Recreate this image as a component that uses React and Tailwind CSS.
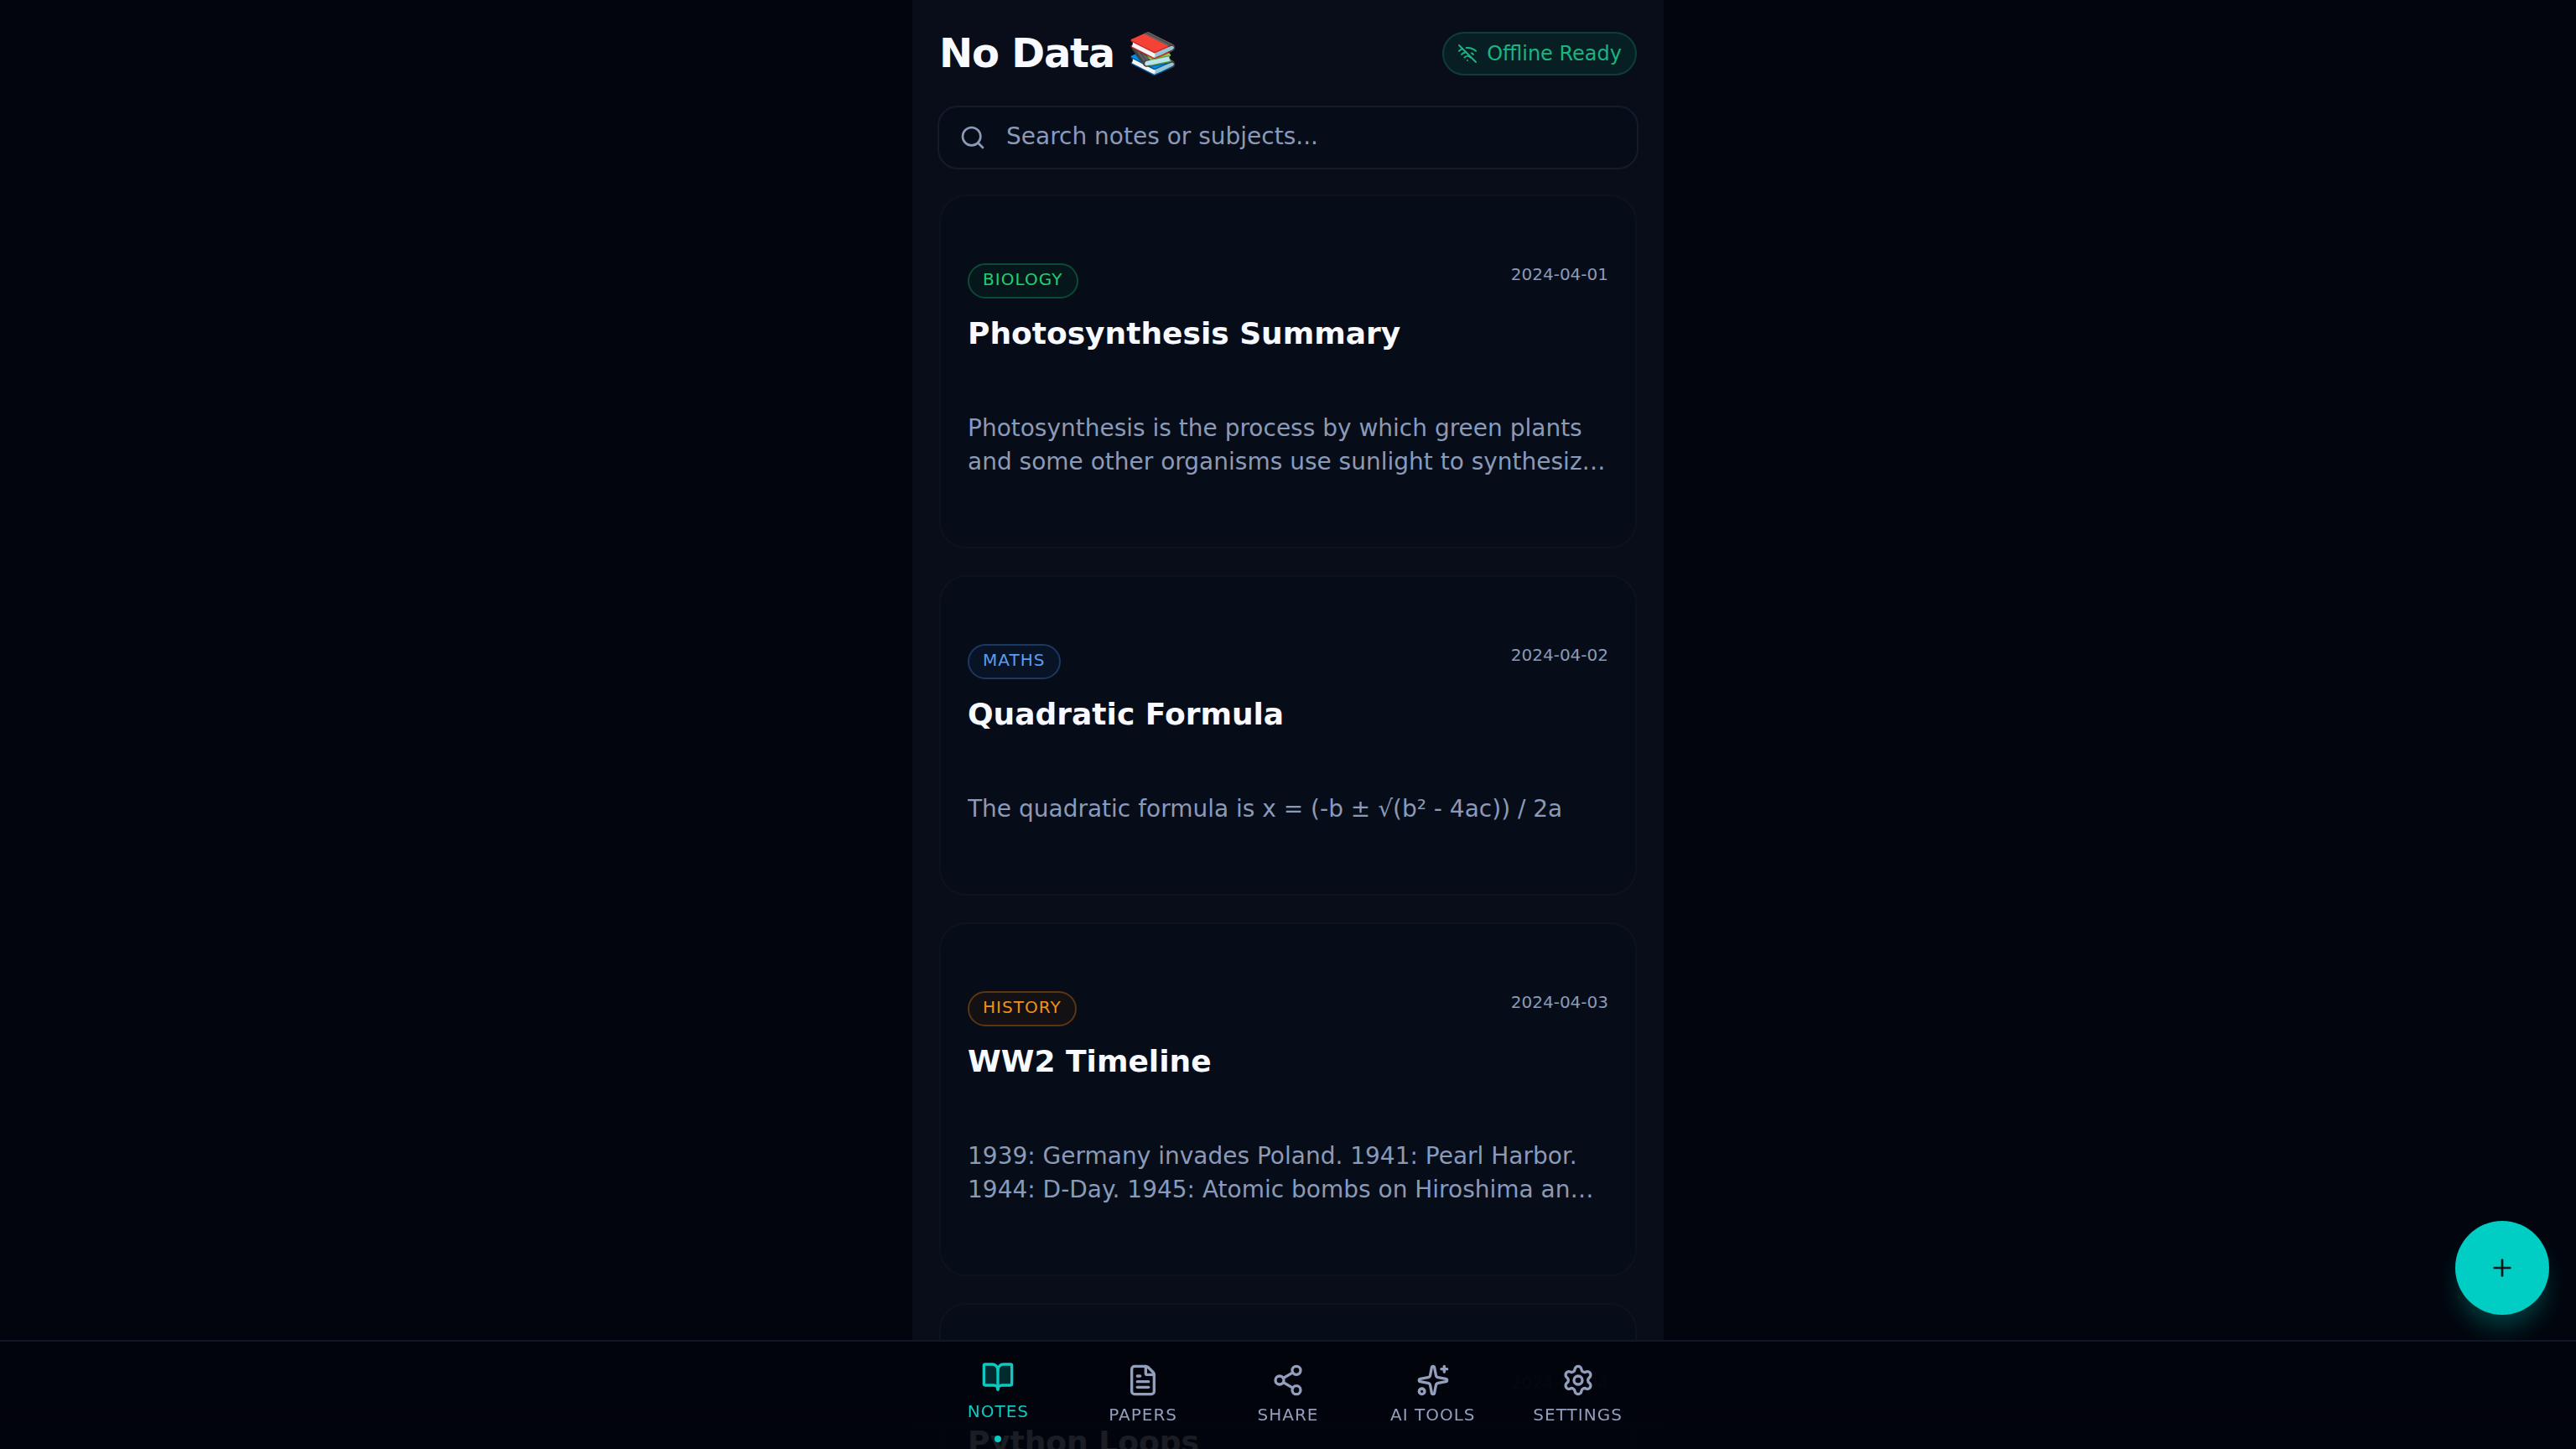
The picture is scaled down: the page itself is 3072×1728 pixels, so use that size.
import { BookOpen, FileText, Share2, Sparkles, Settings, Search, WifiOff, Plus } from "lucide-react";

const notes = [
  {
    subject: "Biology",
    date: "2024-04-01",
    title: "Photosynthesis Summary",
    body: "Photosynthesis is the process by which green plants and some other organisms use sunlight to synthesize foods from carbon dioxide and water.",
    tone: "text-[#1fd070] border-[#0c4a35] bg-[#06171b]",
  },
  {
    subject: "Maths",
    date: "2024-04-02",
    title: "Quadratic Formula",
    body: "The quadratic formula is x = (-b ± √(b² - 4ac)) / 2a",
    tone: "text-[#5a9df0] border-[#1c3760] bg-[#081326]",
  },
  {
    subject: "History",
    date: "2024-04-03",
    title: "WW2 Timeline",
    body: "1939: Germany invades Poland. 1941: Pearl Harbor. 1944: D-Day. 1945: Atomic bombs on Hiroshima and Nagasaki.",
    tone: "text-[#f0901c] border-[#5a3710] bg-[#141115]",
  },
  {
    subject: "CS",
    date: "2024-04-04",
    title: "Python Loops",
    body: "For loops iterate over a sequence. While loops run as long as a condition is true.",
    tone: "text-[#c084fc] border-[#3a1d5a] bg-[#100d1f]",
  },
];

const tabs = [
  { label: "Notes", Icon: BookOpen, active: true },
  { label: "Papers", Icon: FileText },
  { label: "Share", Icon: Share2 },
  { label: "AI Tools", Icon: Sparkles },
  { label: "Settings", Icon: Settings },
];

function NoteCard({ note }) {
  return (
    <article className="rounded-[32px] border-2 border-[#0c131f] bg-[#060d18] px-8 pt-20 pb-[81px]">
      <div className="flex items-start justify-between">
        <span className={`flex h-[42px] items-center rounded-full border-2 px-4 pb-1 text-[20px] leading-[30px] tracking-[1.05px] uppercase ${note.tone}`}>
          {note.subject}
        </span>
        <span className="text-[20px] leading-[26px] text-[#8b9ab8]">{note.date}</span>
      </div>
      <h3 className="mt-[17px] text-[36px] leading-[50px] font-bold text-[#f8faff]">{note.title}</h3>
      <p className="mt-[68px] line-clamp-2 text-[28px] leading-[40px] text-[#8b9ab8]">{note.body}</p>
    </article>
  );
}

export default function App() {
  return (
    <div className="h-[1728px] overflow-hidden bg-[#02050d] font-['DejaVu_Sans',sans-serif]">
      <main className="mx-auto h-full w-[896px] overflow-hidden bg-[#090d19] px-8">
        <header className="flex h-[126px] items-start justify-between">
          <h1 className="mt-[31px] text-[48px] leading-[64px] font-bold tracking-[-1.2px] text-[#f8faff]">No Data 📚</h1>
          <div className="mt-[38px] flex h-[52px] items-center gap-[11px] rounded-full border-2 border-[#0c3f38] bg-[#071f22] px-4 text-[24px] leading-[32px] text-[#1bb383]">
            <WifiOff size={24} strokeWidth={2} />
            <span>Offline Ready</span>
          </div>
        </header>
        <div className="-mx-0.5 flex h-[76px] items-center rounded-3xl border-2 border-[#141b2b] bg-[#060d18] pl-6 text-[#8b9ab8]">
          <Search size={32} strokeWidth={2} />
          <span className="mb-0.5 ml-6 text-[28px] leading-[40px]">Search notes or subjects...</span>
        </div>
        <div className="mt-[30px] flex flex-col gap-8">
          {notes.map((note) => (
            <NoteCard key={note.title} note={note} />
          ))}
        </div>
      </main>

      <button className="fixed right-8 bottom-40 flex size-28 items-center justify-center rounded-full bg-[#00cec5] text-[#02131a] shadow-[0_20px_30px_-6px_rgba(0,206,197,0.3)]">
        <Plus size={32} strokeWidth={2} />
      </button>

      <nav className="fixed inset-x-0 bottom-0 h-[130px] border-t-2 border-[#101827] bg-[#02040c]/60">
        <div className="h-full bg-linear-to-b from-[#02040c]/95 from-50% to-[#02040c]/75 to-85%">
          <div className="mx-auto grid h-full w-[864px] grid-cols-5">
            {tabs.map(({ label, Icon, active }) => (
              <div
                key={label}
                className={`relative flex flex-col items-center ${active ? "pt-[22px] text-[#0ccabf]" : "pt-[26px] text-[#939fbd]"}`}
              >
                <Icon size={40} strokeWidth={2} className={active ? "fill-[#0ccabf]/20" : ""} />
                <span className="mt-1.5 text-[20px] leading-[30px] tracking-[1px] whitespace-nowrap uppercase">{label}</span>
                {active && <span className="absolute bottom-2 size-2 rounded-full bg-[#0ccabf]" />}
              </div>
            ))}
          </div>
        </div>
      </nav>
    </div>
  );
}
